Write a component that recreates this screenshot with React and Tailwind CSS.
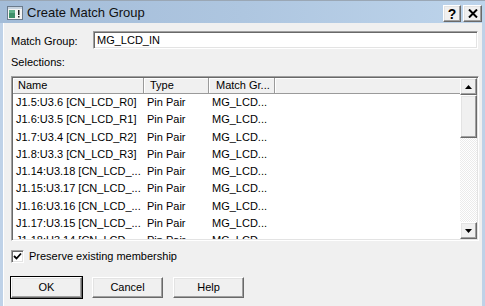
import React from "react";

const rows = [
  ["J1.5:U3.6 [CN_LCD_R0]", "Pin Pair", "MG_LCD..."],
  ["J1.6:U3.5 [CN_LCD_R1]", "Pin Pair", "MG_LCD..."],
  ["J1.7:U3.4 [CN_LCD_R2]", "Pin Pair", "MG_LCD..."],
  ["J1.8:U3.3 [CN_LCD_R3]", "Pin Pair", "MG_LCD..."],
  ["J1.14:U3.18 [CN_LCD_...", "Pin Pair", "MG_LCD..."],
  ["J1.15:U3.17 [CN_LCD_...", "Pin Pair", "MG_LCD..."],
  ["J1.16:U3.16 [CN_LCD_...", "Pin Pair", "MG_LCD..."],
  ["J1.17:U3.15 [CN_LCD_...", "Pin Pair", "MG_LCD..."],
  ["J1.18:U3.14 [CN_LCD_...", "Pin Pair", "MG_LCD..."],
];

const raised =
  "border border-t-white border-l-white border-r-[#696969] border-b-[#696969] shadow-[inset_-1px_-1px_0_#a0a0a0,inset_1px_1px_0_#e3e3e3] bg-[#f0f0f0]";
const sunken =
  "border border-t-[#a0a0a0] border-l-[#a0a0a0] border-r-white border-b-white shadow-[inset_1px_1px_0_#696969,inset_-1px_-1px_0_#e3e3e3]";

function Btn({ children, def }) {
  return (
    <div className={def ? "border border-black" : "border border-transparent"}>
      <div
        className={`${raised} w-[71px] h-[21px] flex items-center justify-center text-[11px] text-black`}
      >
        {children}
      </div>
    </div>
  );
}

export default function App() {
  return (
    <div className="w-[485px] h-[306px] overflow-hidden flex flex-col bg-[#bfd2e8] border-t border-[#9aa7b5] font-['Liberation_Sans',Arial,sans-serif] text-black">
      {/* Title bar */}
      <div className="h-[22px] flex items-center bg-gradient-to-r from-[#a3bcd8] via-[#aec6e0] to-[#bdd4eb] pl-[7px] pr-[3px]">
        <svg width="16" height="14" viewBox="0 0 16 14" className="mt-[1px]">
          <rect x="0.5" y="0.5" width="15" height="13" fill="#f4f4f4" stroke="#6b7b8c" />
          <rect x="1" y="1" width="14" height="2" fill="#c8d4e0" />
          <rect x="2" y="4" width="6" height="8" fill="#3f8f6a" />
          <rect x="2" y="4" width="6" height="3" fill="#5fb08a" />
          <rect x="11" y="4" width="1.5" height="5" fill="#222" />
          <rect x="11" y="10" width="1.5" height="1.5" fill="#222" />
        </svg>
        <span className="ml-[4px] text-[13px] leading-none text-[#111] mt-[1px]">Create Match Group</span>
        <div className="ml-auto flex gap-[2px] mt-[3px]">
          <div className={`${raised} w-[18px] h-[17px] flex items-center justify-center text-[14px] font-bold leading-none`}>
            ?
          </div>
          <div className={`${raised} w-[19px] h-[17px] flex items-center justify-center`}>
            <svg width="10" height="9" viewBox="0 0 10 9">
              <path d="M1 0.5 L9 8.5 M9 0.5 L1 8.5" stroke="#000" strokeWidth="2" />
            </svg>
          </div>
        </div>
      </div>

      {/* Client area */}
      <div className="flex-1 ml-[3px] mr-[3px] border-l border-white bg-[#f0f0f0] pl-[7px] pr-[3px] text-[11px]">
        <div className="flex items-start mt-[8px] h-[17px]">
          <div className="w-[82px] mt-[4px] leading-[13px]">Match Group:</div>
          <div className={`${sunken} bg-white flex-1 h-[18px] mr-[1px] pl-[3px] flex items-center leading-[13px]`}>
            MG_LCD_IN
          </div>
        </div>
        <div className="mt-[8px] leading-[13px]">Selections:</div>
        <div className={`${sunken} mt-[7px] h-[165px] flex bg-white p-[1px]`}>
          <div className="flex-1 flex flex-col overflow-hidden">
            <div className="flex h-[16px] shrink-0">
              <div className="w-[131px] pl-[5px] bg-[#f0f0f0] border-r border-b border-[#9a9a9a] shadow-[inset_1px_1px_0_#fff] flex items-center">Name</div>
              <div className="w-[65px] pl-[6px] bg-[#f0f0f0] border-r border-b border-[#9a9a9a] shadow-[inset_1px_1px_0_#fff] flex items-center">Type</div>
              <div className="w-[66px] pl-[7px] bg-[#f0f0f0] border-r border-b border-[#9a9a9a] shadow-[inset_1px_1px_0_#fff] flex items-center whitespace-nowrap overflow-hidden">Match Gr...</div>
              <div className="flex-1 bg-[#f0f0f0] border-b border-[#9a9a9a] shadow-[inset_1px_1px_0_#fff]" />
            </div>
            {rows.map((r, i) => (
              <div key={i} className="flex h-[17.25px] shrink-0 items-center leading-[13px]">
                <div className="w-[131px] pl-[3px] whitespace-nowrap overflow-hidden">{r[0]}</div>
                <div className="w-[65px] pl-[3px] whitespace-nowrap overflow-hidden">{r[1]}</div>
                <div className="w-[66px] pl-[3px] whitespace-nowrap overflow-hidden">{r[2]}</div>
              </div>
            ))}
          </div>
          {/* Scrollbar */}
          <div className="w-[17px] flex flex-col shrink-0">
            <div className={`${raised} h-[17px] shrink-0 flex items-center justify-center`}>
              <svg width="7" height="4" viewBox="0 0 7 4">
                <path d="M0 4 L3.5 0 L7 4 Z" fill="#000" />
              </svg>
            </div>
            <div className={`${raised} h-[43px] shrink-0`} />
            <div className="flex-1 bg-[repeating-conic-gradient(#ffffff_0_25%,#ebebeb_0_50%)] bg-[length:2px_2px]" />
            <div className={`${raised} h-[17px] shrink-0 flex items-center justify-center`}>
              <svg width="7" height="4" viewBox="0 0 7 4">
                <path d="M0 0 L7 0 L3.5 4 Z" fill="#000" />
              </svg>
            </div>
          </div>
        </div>

        <div className="flex items-center mt-[9px] h-[13px]">
          <div className={`${sunken} w-[13px] h-[13px] bg-white flex items-center justify-center`}>
            <svg width="9" height="9" viewBox="0 0 9 9">
              <path d="M1 4 L3.5 6.5 L8 1.5" stroke="#000" strokeWidth="1.8" fill="none" />
            </svg>
          </div>
          <span className="ml-[5px] leading-[13px]">Preserve existing membership</span>
        </div>

        <div className="flex gap-[8px] mt-[13px] -ml-[1px]">
          <Btn def>OK</Btn>
          <Btn>Cancel</Btn>
          <Btn>Help</Btn>
        </div>
      </div>
    </div>
  );
}
